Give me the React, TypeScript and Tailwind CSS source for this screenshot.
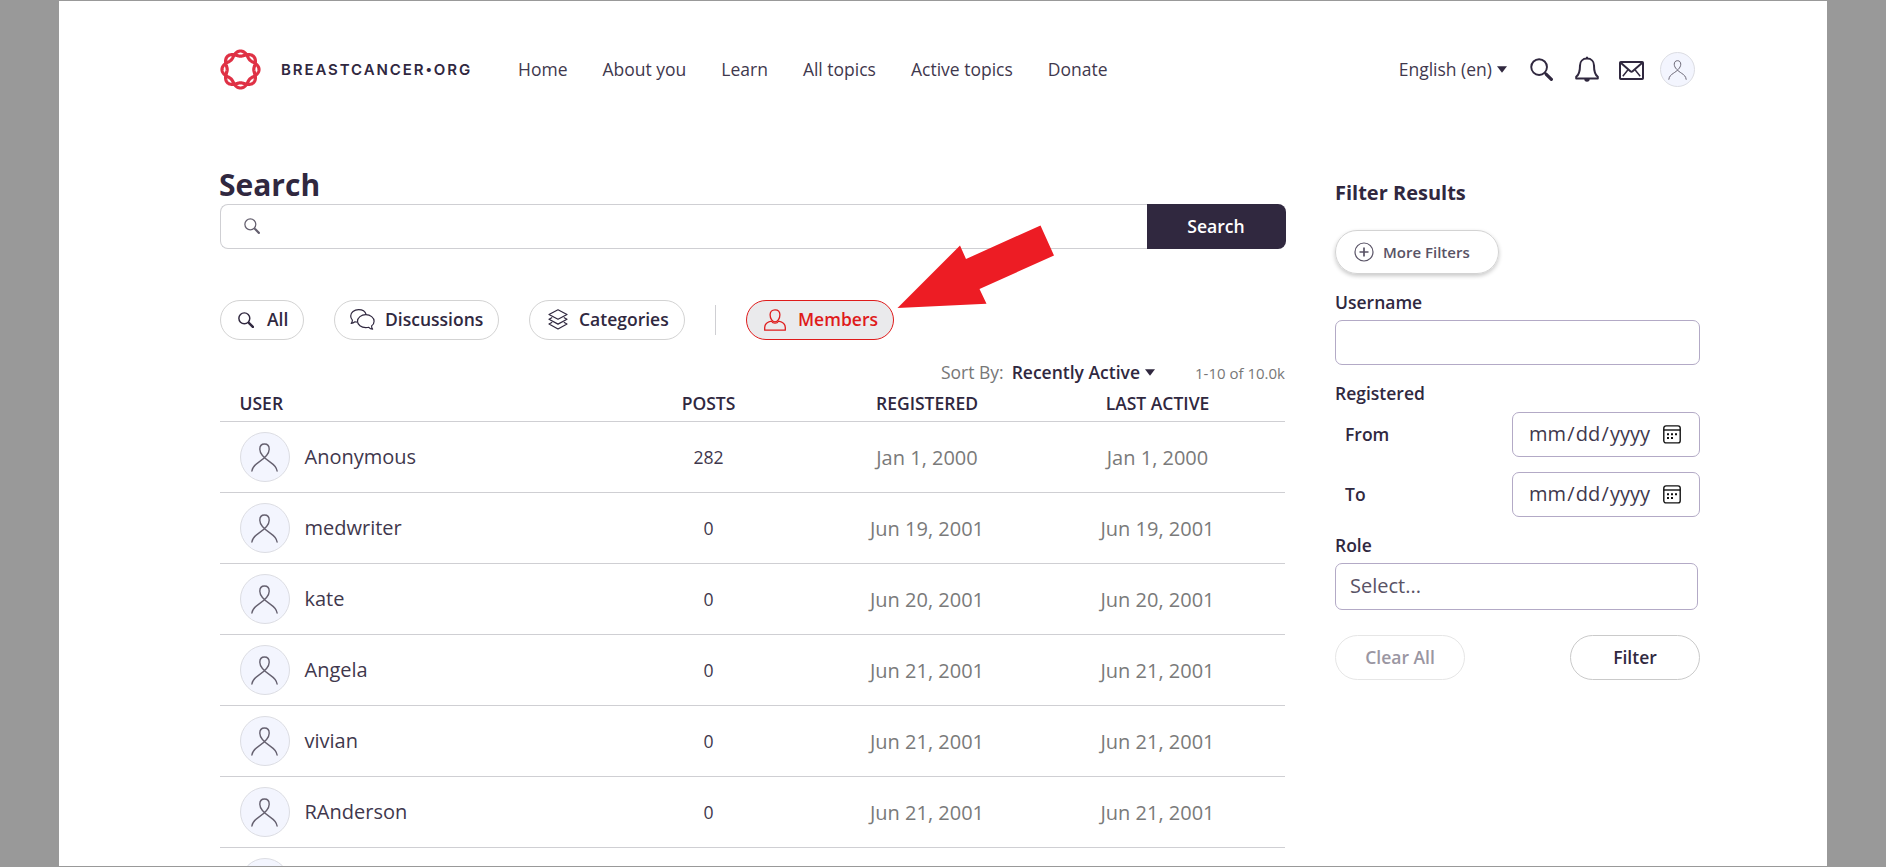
import { useState } from "react";

type Member = {
  name: string;
  posts: number;
  registered: string;
  lastActive: string;
};

const members: Member[] = [
  { name: "Anonymous", posts: 282, registered: "Jan 1, 2000", lastActive: "Jan 1, 2000" },
  { name: "medwriter", posts: 0, registered: "Jun 19, 2001", lastActive: "Jun 19, 2001" },
  { name: "kate", posts: 0, registered: "Jun 20, 2001", lastActive: "Jun 20, 2001" },
  { name: "Angela", posts: 0, registered: "Jun 21, 2001", lastActive: "Jun 21, 2001" },
  { name: "vivian", posts: 0, registered: "Jun 21, 2001", lastActive: "Jun 21, 2001" },
  { name: "RAnderson", posts: 0, registered: "Jun 21, 2001", lastActive: "Jun 21, 2001" },
];

const navLinks = ["Home", "About you", "Learn", "All topics", "Active topics", "Donate"];

// one strand of the twisted ribbon ring
const strand = (sign: number) => {
  const points: string[] = [];
  for (let i = 0; i < 240; i++) {
    const t = (i / 240) * Math.PI * 2;
    const r = 15.9 + sign * 2.6 * Math.cos(4 * t);
    points.push(`${(20.5 + r * Math.cos(t)).toFixed(2)},${(20.5 + r * Math.sin(t)).toFixed(2)}`);
  }
  return points.join(" ");
};

function Logo() {
  return (
    <svg width="41" height="41" viewBox="0 0 41 41" fill="none" stroke="#df3145" strokeWidth="3.2">
      <polygon points={strand(1)} />
      <polygon points={strand(-1)} />
    </svg>
  );
}

function SearchIcon({ size, stroke = 1.6 }: { size: number; stroke?: number }) {
  return (
    <svg width={size} height={size} viewBox="0 0 24 24" fill="none" stroke="currentColor">
      <circle cx="9.5" cy="9.5" r="8.2" strokeWidth={stroke} />
      <path d="M15.4 15.4l2 2" strokeWidth={stroke} />
      <path d="M17 17l5.3 5.3" strokeWidth={stroke * 1.7} strokeLinecap="round" />
    </svg>
  );
}

function BellIcon() {
  return (
    <svg width="24" height="27" viewBox="0 0 24 27" fill="none" stroke="currentColor" strokeWidth="2" strokeLinejoin="round">
      <path d="M12 2.6c-4.4 0-7 3-7 6.8 0 6.6-.8 9.2-3.8 11.4v1.6h21.6v-1.6c-3-2.2-3.8-4.8-3.8-11.4 0-3.8-2.6-6.8-7-6.8z" />
      <path d="M12 .8v2" />
      <path d="M9.3 23h5.4a2.7 2.7 0 0 1-5.4 0z" fill="currentColor" stroke="none" />
    </svg>
  );
}

function MailIcon() {
  return (
    <svg width="25" height="19" viewBox="0 0 25 19" fill="none" stroke="currentColor" strokeWidth="2" strokeLinejoin="round">
      <rect x="1" y="1" width="23" height="17" rx="0.8" />
      <path d="M2 2l9.4 8.3a1.7 1.7 0 0 0 2.2 0L23 2" />
      <path d="M3.8 15.2l5.2-6.4M21.2 15.2L16 8.800" strokeWidth="1.5" />
    </svg>
  );
}

function ChatIcon() {
  return (
    <svg width="25" height="21" viewBox="0 0 25 21" fill="none" stroke="currentColor" strokeWidth="1.2" strokeLinejoin="round">
      <path d="M7.3 13.2c-.9 0-1.600-.1-2.300-.4-1 .8-2.300 1.500-3.800 1.600.8-1 1.200-2.100 1.200-3.200C1.300 10 .7 8.600.7 7 .7 3.500 4.200.7 8.600.7c3.600 0 6.700 2 7.600 4.900" />
      <path d="M15.8 5.700c4.600 0 8.300 2.900 8.300 6.500 0 1.900-1 3.500-2.500 4.700 0 1.100.2 2.300 1 3.300-1.400-.1-2.800-.8-3.800-1.900-.9.300-1.900.4-3 .4-4.600 0-8.300-2.900-8.300-6.500s3.700-6.500 8.300-6.500z" />
    </svg>
  );
}

function LayersIcon() {
  return (
    <svg width="20" height="21" viewBox="0 0 20 21" fill="none" stroke="currentColor" strokeWidth="1.2" strokeLinejoin="round">
      <path d="M10 .8l9 4.7-9 4.7-9-4.7z" />
      <path d="M4.200 8.500L1 10.200l9 4.900 9-4.900-3.200-1.700" />
      <path d="M4.200 13.300L1 15l9 5 9-5-3.200-1.700" />
    </svg>
  );
}

function PersonIcon() {
  return (
    <svg width="22" height="22" viewBox="0 0 22 22" fill="none" stroke="currentColor" strokeWidth="1.3" strokeLinejoin="round">
      <path d="M11 .8c3 0 4.900 2 4.900 5 0 3.600-2.100 7-4.900 7s-4.900-3.400-4.900-7c0-3 1.900-5 4.900-5z" />
      <path d="M7.500 12.200c-4 .8-6.800 2.800-6.800 6.300v2.700h20.600v-2.700c0-3.500-2.800-5.500-6.800-6.300-.8 1.400-2 2-3.500 2s-2.700-.6-3.500-2z" />
    </svg>
  );
}

function CalendarIcon() {
  return (
    <svg width="18" height="19" viewBox="0 0 18 19" fill="none" stroke="#111" strokeWidth="1.4">
      <rect x="0.8" y="0.9" width="16.4" height="17" rx="2.2" />
      <path d="M.7 5h16.6" />
      <path d="M4 9.300h2M8 9.300h2M12 9.300h2M4 13h2M8 13h2" strokeWidth="2" />
    </svg>
  );
}

function Caret() {
  return (
    <svg width="10" height="7" viewBox="0 0 10 7" fill="currentColor">
      <path d="M0 .3h10L5 6.700z" />
    </svg>
  );
}

function Avatar({ small = false }: { small?: boolean }) {
  return (
    <div
      className={
        small
          ? "w-[35px] h-[35px] rounded-full border border-[#dcdde3] bg-[#f3f5fe] flex items-center justify-center"
          : "w-[50px] h-[50px] rounded-full border border-[#dcdde3] bg-[#f3f5fe] flex items-center justify-center"
      }
    >
      <svg width={small ? 19 : 27} height={small ? 20 : 29} viewBox="0 0 27 29" fill="none" stroke="#65606f" strokeWidth="1.4" strokeLinecap="round">
        <path d="M.9 28C1.500 23.500 4 21.600 7.500 19.300 12.500 16 18.200 11.500 18.200 6.200c0-3.200-1.800-5.200-4.700-5.200s-4.700 2-4.700 5.200c0 5.300 5.700 9.800 10.700 13.100 3.500 2.300 6 4.200 6.600 8.700" />
      </svg>
    </div>
  );
}

function DateField({ label }: { label: string }) {
  return (
    <div className="flex items-center justify-between h-[45px] pl-[10px]">
      <label className="text-[17.5px] font-semibold">{label}</label>
      <div className="w-[188px] h-[45px] rounded-[7px] border border-[#b3aac6] flex items-center justify-between pl-4 pr-[18px]">
        <span className="text-[20px] leading-none flex gap-[1.2px] pb-[2px] text-[#3f384d]">
          <span>mm</span>
          <span>/</span>
          <span>dd</span>
          <span>/</span>
          <span>yyyy</span>
        </span>
        <CalendarIcon />
      </div>
    </div>
  );
}

const pill = "h-10 pb-px rounded-full border border-[#d3d3d3] flex items-center text-[17.5px] font-semibold whitespace-nowrap";

function App() {
  const [query, setQuery] = useState<string>("");
  const [username, setUsername] = useState<string>("");

  return (
    <div className="h-[867px] w-[1886px] bg-[#999999] pt-px pl-[59px] overflow-hidden font-['Open_Sans',sans-serif] text-[#30283f]">
      <div className="relative w-[1768px] h-[865px] bg-white overflow-hidden">
        <header className="h-[137px] pl-[161px] pr-[132px] flex items-center">
          <Logo />
          <p className="ml-5 w-[191px] pt-px flex items-center font-['Inter',sans-serif] text-[15px] font-semibold tracking-[1.9px] whitespace-nowrap">
            BREASTCANCER<span className="text-[13px]">•</span>ORG
          </p>
          <nav className="ml-[46px] flex gap-[35px] text-[17.5px] text-[#3f384d]">
            {navLinks.map((link) => (
              <a key={link}>{link}</a>
            ))}
          </nav>
          <div className="ml-auto flex items-center">
            <div className="flex items-center gap-[5px] text-[17.5px]">
              <span className="text-[#3f384d]">English (en)</span>
              <Caret />
            </div>
            <div className="ml-[23px]">
              <SearchIcon size={23} stroke={2} />
            </div>
            <div className="ml-[22px]">
              <BellIcon />
            </div>
            <div className="ml-5 mr-4 pt-px">
              <MailIcon />
            </div>
            <Avatar small />
          </div>
        </header>

        <div className="pl-[161px] flex">
          <main className="w-[1066px] pt-[29px]">
            <h1 className="h-[37px] leading-[36px] text-[30px] font-bold -ml-px">Search</h1>
            <form className="flex h-[45px]" onSubmit={(e) => e.preventDefault()}>
              <div className="flex-1 flex items-center pl-[23px] pb-px border border-r-0 border-[#cfcfd3] rounded-l-[8px]">
                <span className="text-[#65606f]">
                  <SearchIcon size={16} stroke={1.9} />
                </span>
                <input
                  type="text"
                  className="flex-1 pl-3 outline-none"
                  onChange={(e) => setQuery(e.target.value)}
                  value={query}
                />
              </div>
              <button className="w-[139px] pr-px rounded-r-[8px] bg-[#30283f] text-white text-[17.6px] font-semibold">
                Search
              </button>
            </form>

            <div className="mt-[51px] flex items-center">
              <div className={`${pill} w-[84px] pl-[17px] gap-[13px]`}>
                <SearchIcon size={16} stroke={2.2} />
                All
              </div>
              <div className={`${pill} ml-[30px] w-[165px] pl-[15px] gap-[10px]`}>
                <ChatIcon />
                Discussions
              </div>
              <div className={`${pill} ml-[30px] w-[156px] pl-[18px] gap-[11px]`}>
                <LayersIcon />
                Categories
              </div>
              <div className="ml-[30px] w-px h-[30px] bg-[#cfcfd3]" />
              <div className="ml-[30px] w-[148px] h-10 pl-[17px] rounded-full border border-[#df1b1b] bg-[#eaeaec] text-[#df1b1b] flex items-center gap-3 text-[17.5px] font-semibold">
                <PersonIcon />
                <span className="pb-px">Members</span>
              </div>
            </div>

            <div className="mt-[18px] h-7 flex items-center justify-end pr-px text-[17.5px]">
              <span className="text-[#777]">Sort By:</span>
              <span className="ml-2 mr-[5px] font-semibold">Recently Active</span>
              <Caret />
              <span className="ml-10 pt-[2px] text-[15px] text-[#777]">1-10 of 10.0k</span>
            </div>

            <div className="w-[1065px]">
              <div className="h-9 grid grid-cols-[389px_199px_238px_223px] items-center border-b border-[#cfcfd3] text-center text-[17.5px] font-semibold">
                <span className="pl-[19.5px] text-left">USER</span>
                <span>POSTS</span>
                <span>REGISTERED</span>
                <span>LAST ACTIVE</span>
              </div>
              {members.map((member) => (
                <div
                  key={member.name}
                  className="h-[71px] grid grid-cols-[389px_199px_238px_223px] items-center border-b border-[#cfcfd3] text-center"
                >
                  <div className="pl-[19.5px] flex items-center gap-[15px] text-[20px] text-[#3f384d]">
                    <Avatar />
                    {member.name}
                  </div>
                  <span className="text-[17.6px] text-[#3f384d]">{member.posts}</span>
                  <span className="pt-[2px] text-[20px] text-[#7a7a7a]">{member.registered}</span>
                  <span className="pt-[2px] text-[20px] text-[#7a7a7a]">{member.lastActive}</span>
                </div>
              ))}
              <div className="pl-[19.5px] pt-[10px]">
                <Avatar />
              </div>
            </div>
          </main>

          <aside className="ml-[49px] w-[365px] pt-[37px]">
            <h2 className="h-[35px] leading-9 text-[20px] font-bold">Filter Results</h2>
            <button className="mt-5 w-[164px] h-[44px] pl-[18px] rounded-full border border-[#d3d3d3] shadow-[0_2px_4px_rgba(0,0,0,0.22)] flex items-center gap-[9px] text-[15px] font-semibold text-[#595366]">
              <svg width="20" height="20" viewBox="0 0 20 20" fill="none" stroke="currentColor">
                <circle cx="10" cy="10" r="9" strokeWidth="1.2" />
                <path d="M10 5.500v9M5.500 10h9" strokeWidth="1.7" />
              </svg>
              More Filters
            </button>
            <label className="block mt-4 h-6 leading-[25px] text-[17.5px] font-semibold">Username</label>
            <input
              type="text"
              className="block mt-[6px] w-[365px] h-[45px] px-4 rounded-[7px] border border-[#b3aac6]"
              onChange={(e) => setUsername(e.target.value)}
              value={username}
            />
            <p className="mt-4 h-[23px] leading-6 text-[17.5px] font-semibold">Registered</p>
            <div className="mt-2 flex flex-col gap-[15px]">
              <DateField label="From" />
              <DateField label="To" />
            </div>
            <p className="mt-4 h-6 leading-[25px] text-[17.5px] font-semibold">Role</p>
            <div className="mt-[6px] w-[363px] h-[47px] pl-[14px] pb-px rounded-[7px] border border-[#b3aac6] flex items-center text-[20px] text-[#595366]">
              Select...
            </div>
            <div className="mt-[25px] flex justify-between">
              <button className="w-[130px] h-[45px] rounded-full border border-[#e6e6e6] text-[17.5px] font-semibold text-[#9a96a2]">
                Clear All
              </button>
              <button className="w-[130px] h-[45px] rounded-full border border-[#cacaca] text-[17.5px] font-semibold">
                Filter
              </button>
            </div>
          </aside>
        </div>

        {/* callout arrow over the Members tab */}
        <svg className="absolute left-[838px] top-[224px]" width="158" height="84" viewBox="0 0 158 84" fill="#ed1c24">
          <polygon points="0.5,83 89.5,78.7 82.5,64 157,30.5 143.5,0.5 69,34 63,20.5" />
        </svg>
      </div>
    </div>
  );
}

export default App;
